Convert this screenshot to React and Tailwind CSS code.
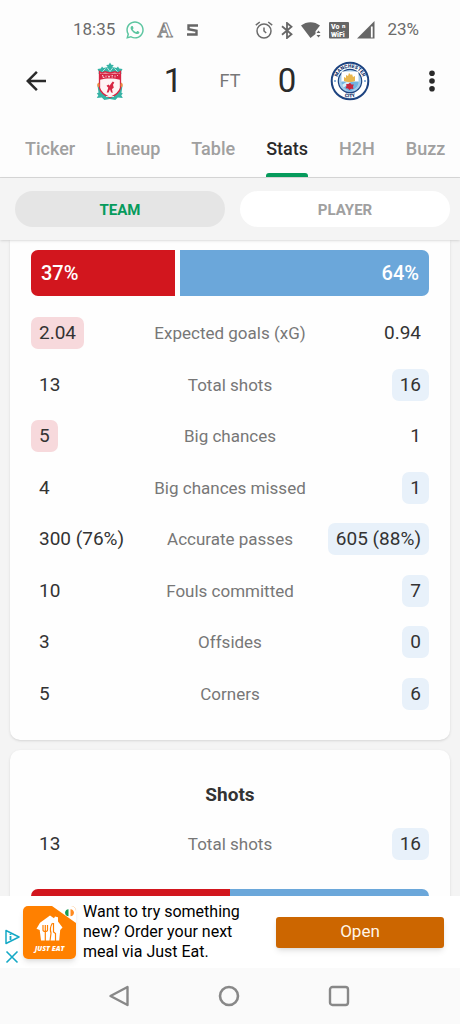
import { useState } from 'react';
import { FaWhatsapp } from 'react-icons/fa';
import { MdArrowBack } from 'react-icons/md';

const tabs = ['Ticker', 'Lineup', 'Table', 'Stats', 'H2H', 'Buzz'];

const topStats = [
  { label: 'Expected goals (xG)', home: '2.04', away: '0.94', best: 'home' },
  { label: 'Total shots', home: '13', away: '16', best: 'away' },
  { label: 'Big chances', home: '5', away: '1', best: 'home' },
  { label: 'Big chances missed', home: '4', away: '1', best: 'away' },
  { label: 'Accurate passes', home: '300 (76%)', away: '605 (88%)', best: 'away' },
  { label: 'Fouls committed', home: '10', away: '7', best: 'away' },
  { label: 'Offsides', home: '3', away: '0', best: 'away' },
  { label: 'Corners', home: '5', away: '6', best: 'away' },
];

const possession = { home: 37, away: 64 };

const StatusBar = () => (
  <div className="flex h-[60px] shrink-0 items-center justify-between pl-[73px] pr-[41px] text-[17px] text-[#6b6b6b]">
    <div className="flex items-center gap-2">
      <span>18:35</span>
      <FaWhatsapp className="mx-[2px] size-5 text-[#5cc5a0]" />
      <svg className="h-7 w-5" viewBox="0 0 20 28">
        <text x="10" y="21" textAnchor="middle" fontFamily="Liberation Serif, serif" fontWeight="700" fontSize="21" fill="#fff" stroke="#808080" strokeWidth="1">A</text>
      </svg>
      <svg className="h-3 w-5" viewBox="0 0 20 12">
        <path d="M15 1.500H5.500V5.200L13.500 6.800V10.500H4" fill="none" stroke="#666" strokeWidth="2.400" />
      </svg>
    </div>
    <div className="flex items-center gap-2">
      <svg className="size-[18px]" viewBox="0 0 18 18" fill="none" stroke="#6b6b6b" strokeWidth="1.500">
        <circle cx="9" cy="10" r="7" />
        <path d="M9 6.500V10l2.200 2M.8 4.200 4.800 1M17.200 4.200 13.200 1" />
      </svg>
      <svg className="h-[17px] w-3" viewBox="0 0 12 17" fill="none" stroke="#666" strokeWidth="1.800">
        <path d="M1 4.200l9.500 8-4.500 3.800V1L10.500 4.800 1 12.800" />
      </svg>
      <svg className="h-5 w-5" viewBox="0 0 20 20" fill="#666">
        <path d="M0 5.500C5.500 1 13.500 1 19 5.500L14.500 11.200V14L9.500 18z" />
        <path d="m17.500 10.500 2 2.500h-4zM17.500 17.500l2-2.500h-4z" />
      </svg>
      <svg className="h-[18px] w-5" viewBox="0 0 20 18">
        <rect y="1" width="20" height="16.500" rx="1" fill="#666" />
        <g fill="#fff" fontFamily="Roboto, sans-serif" fontWeight="900">
          <text x="2" y="8" fontSize="7">Vo</text>
          <text x="13" y="6.500" fontSize="6">n</text>
          <text x="2" y="16" fontSize="7">WiFi</text>
        </g>
      </svg>
      <svg className="h-[18px] w-[18px]" viewBox="0 0 18 18">
        <path d="M0 17.500 17.500 0v17.500z" fill="#666" />
        <path d="M14.800 5.500v11" stroke="#fff" strokeWidth="1.800" />
      </svg>
      <span className="pl-1">23%</span>
    </div>
  </div>
);

const LiverpoolCrest = () => (
  <svg className="h-10 w-10" viewBox="0 0 40 40" role="img" aria-label="Liverpool">
    <g fill="#35b3a5">
      <path d="M20 1.500l1.300 2.200 2.500.3-1.500 1.900 4.200 1 1.500-1.400 1.200 2 3.300.4-1.500 3 .8 1.600H8.200l.8-1.600-1.500-3 3.300-.4 1.200-2 1.500 1.400 4.200-1-1.500-1.900 2.500-.3z" />
      <path d="M6.800 32.500c2-1.500 4-1.500 6-.3l7 4.300 7-4.300c2-1.200 4-1.200 6 .3l-1.500 1.800 1.500 2.700-5-.5-2.500 2.500-5.500-1-5.500 1-2.500-2.500-5 .5 1.500-2.700z" />
      <path d="M7.500 24.500l3 3 1.500 6-3.500-2zM32.500 24.500l-3 3-1.500 6 3.500-2z" />
    </g>
    <path d="M9.500 10.500l2.500 1.500 3-1.200L20 12l5-1.200 3 1.200 2.500-1.500V27c-1 4-5.500 7.500-10.500 9.500-5-2-9.500-5.500-10.500-9.500z" fill="#fff4f4" stroke="#d72643" strokeWidth="1.300" />
    <path d="M10 12.500h20v6.300c-6-1.700-14-1.700-20 0z" fill="#d72643" />
    <path d="M12 14.500h1v2h1.500M16 14.500v2M18 14.500l1 2 1-2M21.500 14.500h1.500M21.500 16h1.500M25 14.500v2M27 14.500h1" fill="none" stroke="#fff" strokeWidth=".7" />
    <path d="M12.500 10.500l3-3M24.500 7.500l3 3M17 6.500l3 4 3-4" stroke="#d9f1ee" strokeWidth=".8" fill="none" />
    <path d="M22.800 20.500l1.500 1-1.300 2.200.8 3-1.800 1.300.7 4-1.700-.8-1-3-1.500 3.300h-1.800l1.600-4.700-1.800-2 2-1.200 1 1.200 2-2.800z" fill="#d72643" />
    <path d="M8.500 21.500c1.500 1.500 1.500 3.500 0 5-1.800-1.500-1.800-3.500 0-5zM31.500 21.500c-1.500 1.500-1.500 3.500 0 5 1.800-1.500 1.800-3.500 0-5z" fill="#e88b45" />
    <path d="M16 35.500h8" stroke="#fff" strokeWidth=".8" />
  </svg>
);

const CityCrest = () => (
  <svg className="h-10 w-10" viewBox="0 0 40 40" role="img" aria-label="Manchester City">
    <defs>
      <path id="cityTop" d="M6.700 20a13.300 13.300 0 0 1 26.600 0" />
      <path id="cityBottom" d="M3.500 20a16.500 16.500 0 0 0 33 0" />
      <clipPath id="cityShield">
        <path d="M11.500 10.500h17V21c0 4.500-4 7.500-8.500 9.500-4.500-2-8.500-5-8.500-9.500z" />
      </clipPath>
    </defs>
    <circle cx="20" cy="20" r="18.300" fill="#fff" stroke="#1d4380" strokeWidth="2" />
    <circle cx="20" cy="20" r="11.700" fill="#a5cdec" stroke="#1d4380" strokeWidth="1.200" />
    <g fill="#17386f" fontFamily="Roboto, sans-serif" fontWeight="900" textAnchor="middle">
      <text fontSize="5"><textPath href="#cityTop" startOffset="50%">MANCHESTER</textPath></text>
      <text fontSize="5"><textPath href="#cityBottom" startOffset="50%">CITY</textPath></text>
    </g>
    <g clipPath="url(#cityShield)">
      <path d="M10 9h20v12H10z" fill="#fff" />
      <path d="M10 20.500h20V32H10z" fill="#72b4e2" />
      <path d="m10 25 8-5h4l-10 8zM22 30l8-6v5l-6 4z" fill="#d9ecf8" />
      <path d="M14 20v-4l2 1v-3l2 1 1-3 2 2 1-1 1 3 2-1v5c-3 1.500-8 1.500-11 0z" fill="#e8b64e" />
      <path d="m20 21.700 1.500 1.700 2.300.2-.8 2.200.4 2.300-2.200-.4-1.800 1.200-1.400-1.500-2.300-.2.800-2.100-.3-2.200 2.300.2z" fill="#c9253b" />
    </g>
    <path d="M4 20h2M34 20h2" stroke="#8fb5dc" strokeWidth="2" />
  </svg>
);

const MatchHeader = () => (
  <header className="grid h-[42px] shrink-0 grid-cols-[1fr_auto_1fr] items-center px-4 text-[#2a2a2a]">
    <button type="button" aria-label="Back" className="flex w-10 justify-center">
      <MdArrowBack className="size-[30px]" />
    </button>
    <div className="flex items-center">
      <LiverpoolCrest />
      <span className="ml-[14px] w-[58px] text-center text-[33px] leading-[42px]">1</span>
      <span className="w-14 text-center text-[18px] leading-[42px] text-[#777]">FT</span>
      <span className="mr-[14px] w-[58px] text-center text-[33px] leading-[42px]">0</span>
      <CityCrest />
    </div>
    <button type="button" aria-label="More options" className="flex w-6 justify-center justify-self-end">
      <svg className="h-6 w-6" viewBox="0 0 24 24" fill="currentColor">
        <circle cx="12" cy="4.300" r="2.800" />
        <circle cx="12" cy="12" r="2.800" />
        <circle cx="12" cy="19.700" r="2.800" />
      </svg>
    </button>
  </header>
);

const StatRow = ({ label, home, away, best }) => (
  <div className="grid h-8 grid-cols-[1fr_auto_1fr] items-center text-[19px] text-[#333]">
    <span className={`justify-self-start rounded-[7px] px-2 leading-8 ${best === 'home' ? 'bg-[#f7d9dc]' : ''}`}>{home}</span>
    <span className="text-[17px] leading-8 text-[#777]">{label}</span>
    <span className={`justify-self-end rounded-[7px] px-2 leading-8 ${best === 'away' ? 'bg-[#e8f1fa]' : ''}`}>{away}</span>
  </div>
);

const AdBanner = () => (
  <aside className="flex h-[72px] shrink-0 items-center bg-white pr-4">
    <div className="flex w-[23px] shrink-0 flex-col items-center gap-1 self-end pb-[3px]">
      <button type="button" aria-label="Ad choices">
        <svg className="size-4" viewBox="0 0 16 16" fill="none" stroke="#15a9c6" strokeWidth="1.500" strokeLinejoin="round">
          <path d="M2 1.500 15 8 2 14.500z" />
          <path d="M6.500 7v4M6.500 4.700v1.300" strokeWidth="1.800" />
        </svg>
      </button>
      <button type="button" aria-label="Close ad">
        <svg className="size-4" viewBox="0 0 16 16" fill="none" stroke="#15a9c6" strokeWidth="1.600">
          <path d="M2.500 2.500l11 11M13.500 2.500l-11 11" />
        </svg>
      </button>
    </div>
    <svg className="size-[53px] shrink-0 rounded-[5px] shadow-md" viewBox="0 0 53 53" role="img" aria-label="Just Eat">
      <rect width="53" height="53" fill="#ff8000" />
      <path d="M29 0h24v17z" fill="#fff" />
      <path d="M45.500 3.200v7a4 4 0 0 1-3.500-3.500 4 4 0 0 1 3.500-3.500z" fill="#159b55" />
      <path d="M47.500 3.200v7A4 4 0 0 0 51 6.700a4 4 0 0 0-3.500-3.500z" fill="#ff8a20" />
      <path d="M27 9.500l4 2.700 1-1.800 3 .8v4.300l4.500 6-2.300 2.500-1 10.500H18l-1.300-10.500-3.200-1.200 3.500-6z" fill="#fff" />
      <path d="M20 19v5c0 2 4.500 2 4.500 0v-5M22.300 19v16" stroke="#ff8000" strokeWidth="1.200" fill="none" />
      <path d="M29.500 17c-2 3-2.500 7-1.500 10l-1 8M30.500 17v9l2 1.500v7.500" stroke="#ff8000" strokeWidth="1.200" fill="none" />
      <text x="26.500" y="44.500" textAnchor="middle" fontFamily="Open Sans, sans-serif" fontWeight="800" fontStyle="italic" fontSize="7" fill="#fff">JUST EAT</text>
    </svg>
    <p className="w-[193px] shrink-0 pl-[7px] text-[16px] leading-5 text-black">
      Want to try something<br />new? Order your next<br />meal via Just Eat.
    </p>
    <button type="button" className="ml-auto h-[31px] w-[168px] rounded-[3px] bg-[#cc6600] text-[17px] text-[#fff5e8] shadow-md">
      Open
    </button>
  </aside>
);

const SystemNav = () => (
  <nav className="flex h-14 shrink-0 items-center justify-center gap-[88px] bg-[#fafafa] pr-[2px]">
    <button type="button" aria-label="System back">
      <svg className="size-[22px]" viewBox="0 0 22 22" fill="none" stroke="#888" strokeWidth="2.400" strokeLinejoin="round">
        <path d="M19.500 2v18L2.500 11z" />
      </svg>
    </button>
    <button type="button" aria-label="Home">
      <svg className="size-[22px]" viewBox="0 0 22 22" fill="none" stroke="#888" strokeWidth="2.600">
        <circle cx="11" cy="11" r="9" />
      </svg>
    </button>
    <button type="button" aria-label="Recent apps">
      <svg className="size-[22px]" viewBox="0 0 22 22" fill="none" stroke="#888" strokeWidth="2.400">
        <rect x="2" y="2" width="18" height="18" rx="2.500" />
      </svg>
    </button>
  </nav>
);

const App = () => {
  const [tab, setTab] = useState('Stats');
  const [view, setView] = useState('TEAM');

  return (
    <div className="flex h-screen flex-col overflow-hidden bg-[#fdfdfd] font-[Roboto,sans-serif]">
      <StatusBar />
      <MatchHeader />

      <nav className="flex h-[76px] shrink-0 gap-[31px] overflow-hidden border-b border-[#d8d8d8] pl-[25px] pt-[33px]">
        {tabs.map((name) => (
          <button
            key={name}
            type="button"
            onClick={() => setTab(name)}
            className={`flex shrink-0 flex-col justify-between text-[18px] font-medium ${tab === name ? 'text-[#2a2a2a]' : 'text-[#a0a0a0]'}`}
          >
            {name}
            <span className={`h-1 w-full rounded-t-[3px] ${tab === name ? 'bg-[#069b5c]' : ''}`} />
          </button>
        ))}
      </nav>

      <div className="z-10 flex h-[62px] shrink-0 items-center gap-[15px] bg-[#f4f4f4] pl-[15px] pr-[10px] shadow-sm">
        {['TEAM', 'PLAYER'].map((name) => (
          <button
            key={name}
            type="button"
            onClick={() => setView(name)}
            className={`h-9 flex-1 rounded-full pt-[2px] text-[15px] font-bold ${view === name ? 'bg-[#e5e5e5] text-[#069b5c]' : 'bg-white text-[#a0a0a0]'}`}
          >
            {name}
          </button>
        ))}
      </div>

      <main className="flex min-h-0 flex-1 flex-col gap-[10px] overflow-hidden bg-[#f4f4f4] px-[10px]">
        <section className="shrink-0 rounded-b-[10px] bg-[#fefefe] px-[21px] pb-[30px] pt-[10px] shadow">
          <div className="flex h-[46px] gap-[5px] text-[20px] font-medium leading-[46px] text-white">
            <div className="basis-0 rounded-l-[7px] bg-[#d2161e]" style={{ flexGrow: possession.home }}>
              <span className="ml-[10px]">{possession.home}%</span>
            </div>
            <div className="basis-0 rounded-r-[7px] bg-[#6ba7da] text-right" style={{ flexGrow: possession.away }}>
              <span className="mr-[10px]">{possession.away}%</span>
            </div>
          </div>
          <div className="mt-[21px] flex h-[393px] flex-col justify-between">
            {topStats.map((s) => <StatRow key={s.label} {...s} />)}
          </div>
        </section>

        <section className="shrink-0 rounded-[10px] bg-[#fefefe] px-[21px] pt-[30px] shadow">
          <h2 className="text-center text-[19px] font-bold leading-[30px] text-[#333]">Shots</h2>
          <div className="mt-[18px]">
            <StatRow label="Total shots" home="13" away="16" best="away" />
          </div>
          <div className="mt-[29px] flex h-[46px]">
            <div className="flex-1 rounded-l-[7px] bg-[#d2161e]" />
            <div className="flex-1 rounded-r-[7px] bg-[#6ba7da]" />
          </div>
        </section>
      </main>

      <AdBanner />
      <SystemNav />
    </div>
  );
};

export default App;
